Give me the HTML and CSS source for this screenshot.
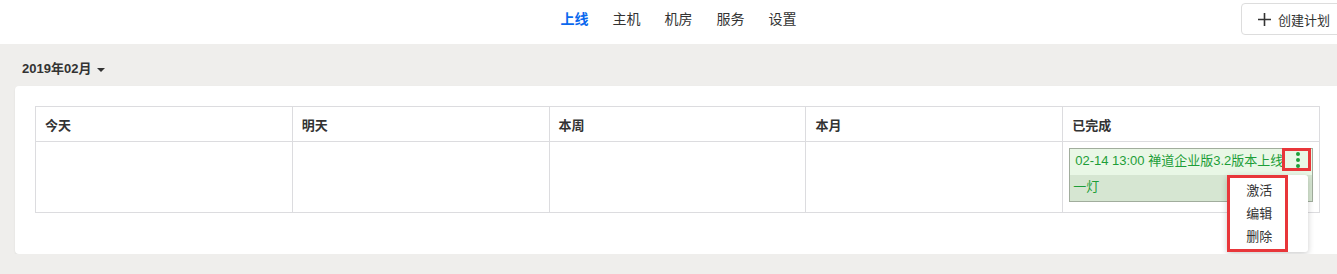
FILE: index.html
```html
<!DOCTYPE html>
<html lang="zh-CN">
<head>
  <meta charset="UTF-8">
  <meta name="viewport" content="width=device-width, initial-scale=1.0">
  <title>上线计划</title>
  <link rel="stylesheet" href="styles.css">
</head>
<body>
  <div class="page">
    <header class="topbar">
      <nav class="nav">
        <a class="nav-item active" href="#">上线</a>
        <a class="nav-item" href="#">主机</a>
        <a class="nav-item" href="#">机房</a>
        <a class="nav-item" href="#">服务</a>
        <a class="nav-item" href="#">设置</a>
      </nav>
      <button class="btn-create">
        <svg class="plus" width="13" height="13" viewBox="0 0 13 13">
          <path d="M6.5 0v13M0 6.5h13" stroke="#333" stroke-width="1.6" fill="none"/>
        </svg>
        创建计划
      </button>
    </header>

    <main class="content">
      <div class="month-picker">
        2019年02月 <span class="caret"></span>
      </div>

      <section class="panel">
        <table class="board">
          <thead>
            <tr>
              <th>今天</th>
              <th>明天</th>
              <th>本周</th>
              <th>本月</th>
              <th>已完成</th>
            </tr>
          </thead>
          <tbody>
            <tr>
              <td></td>
              <td></td>
              <td></td>
              <td></td>
              <td>
                <div class="plan-card">
                  <div class="plan-title">
                    02-14 13:00 禅道企业版3.2版本上线
                    <span class="more">
                      <i></i><i></i><i></i>
                    </span>
                    <span class="mark mark-more"></span>
                  </div>
                  <div class="plan-owner">一灯</div>

                  <ul class="menu">
                    <li>激活</li>
                    <li>编辑</li>
                    <li>删除</li>
                    <span class="mark mark-menu"></span>
                  </ul>
                </div>
              </td>
            </tr>
          </tbody>
        </table>
      </section>
    </main>
  </div>
</body>
</html>
```

FILE: styles.css
```css
* {
  margin: 0;
  padding: 0;
  box-sizing: border-box;
}

body {
  font-family: "Liberation Sans", "Noto Sans CJK SC", sans-serif;
  font-size: 13px;
  color: #333;
  background: #efeeec;
  overflow: hidden;
}

.page {
  width: 1357px;
}

.topbar {
  height: 44px;
  background: #fff;
  position: relative;
}

.nav {
  display: flex;
  justify-content: center;
  gap: 24px;
  line-height: 38px;
}

.nav-item {
  font-size: 14px;
  color: #333;
  text-decoration: none;
}

.nav-item.active {
  color: #0a68ee;
  font-weight: bold;
}

.btn-create {
  position: absolute;
  top: 3px;
  left: 1241px;
  height: 32px;
  padding: 0 16px;
  display: flex;
  align-items: center;
  gap: 7px;
  font-family: inherit;
  font-size: 13px;
  color: #333;
  background: #fff;
  border: 1px solid #ddd;
  border-radius: 4px;
}

.content {
  padding-top: 15px;
}

.month-picker {
  padding: 0 22px;
  line-height: 20px;
  font-weight: bold;
  margin-bottom: 7px;
  display: flex;
  align-items: center;
  gap: 6px;
}

.caret {
  width: 0;
  height: 0;
  border-left: 4px solid transparent;
  border-right: 4px solid transparent;
  border-top: 4px solid #333;
  margin-top: 1px;
}

.panel {
  margin: 0 17px 0 15px;
  padding: 20px 20px 41px;
  background: #fff;
  border-radius: 4px;
  box-shadow: 0 1px 2px rgba(0, 0, 0, 0.08);
}

.board {
  width: 100%;
  border-collapse: collapse;
  table-layout: fixed;
}

.board th,
.board td {
  border: 1px solid #dcdcdf;
  text-align: left;
}

.board th {
  height: 35px;
  padding: 0 9px;
  font-weight: bold;
}

.board td {
  height: 71px;
  padding: 6px 6px;
  vertical-align: top;
}

.plan-card {
  position: relative;
  border: 1px solid #a1ad9d;
}

.plan-title {
  position: relative;
  height: 26px;
  line-height: 24px;
  padding: 0 5px;
  color: #1d9e38;
  background: #e9f7e6;
}

.more {
  position: absolute;
  top: 3px;
  right: 12px;
  display: flex;
  flex-direction: column;
  gap: 2px;
}

.more i {
  width: 4px;
  height: 4px;
  border-radius: 50%;
  background: #1d9e38;
}

.plan-owner {
  height: 26px;
  line-height: 24px;
  padding: 0 3px;
  color: #1d9e38;
  background: #d6e6d2;
}

.menu {
  position: absolute;
  top: 26px;
  left: 157px;
  width: 81px;
  padding: 4px 0;
  list-style: none;
  background: #fff;
  border-radius: 3px;
  box-shadow: 0 2px 6px rgba(0, 0, 0, 0.2);
  z-index: 2;
}

.menu li {
  line-height: 23px;
  padding: 0 19px;
}

.mark {
  position: absolute;
  border: 3px solid #e8363a;
}

.mark-more {
  top: -1px;
  right: 1px;
  width: 29px;
  height: 23px;
}

.mark-menu {
  top: 0;
  left: 0;
  width: 61px;
  height: 100%;
}
```
